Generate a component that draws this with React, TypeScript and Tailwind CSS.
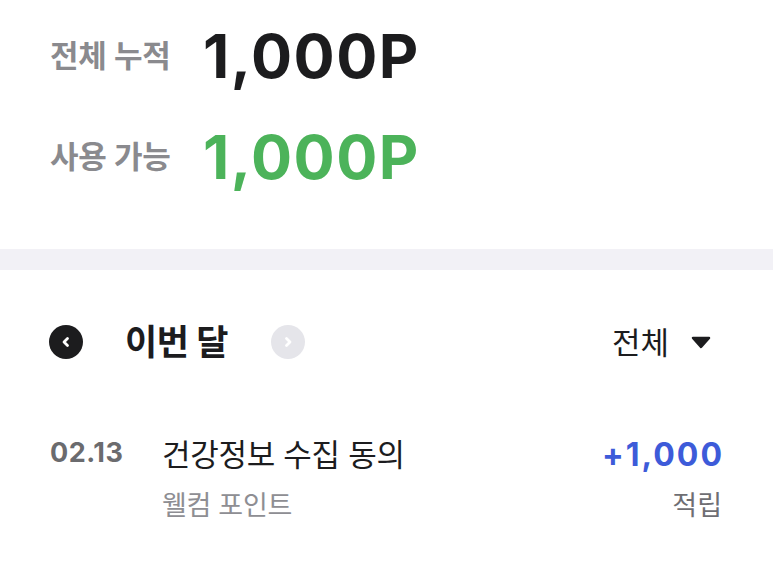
import React from 'react';

const font = "font-['Inter','Noto_Sans_CJK_KR',sans-serif]";

const Arrow = ({ dir, active }: { dir: 'left' | 'right'; active: boolean }) => (
  <div
    className={`w-[34px] h-[34px] rounded-full flex items-center justify-center ${active ? 'bg-[#1c1c1e]' : 'bg-[#e5e5ea]'}`}
  >
    <svg width="14" height="14" viewBox="0 0 14 14" fill="none">
      <path
        d={dir === 'left' ? 'M8.5 3.5 L5 7 L8.5 10.5' : 'M5.5 3.5 L9 7 L5.5 10.5'}
        stroke="white"
        strokeWidth="2.8"
        strokeLinecap="round"
        strokeLinejoin="round"
      />
    </svg>
  </div>
);

export default function App() {
  return (
    <div className={`w-[773px] h-[576px] bg-white overflow-hidden ${font}`}>
      <div className="pt-[16px] pb-[52px] pl-[50px] flex flex-col gap-[21px]">
        <div className="flex items-center h-[80px]">
          <span className="w-[153px] text-[31px] font-semibold text-[#8a8a8e] tracking-[-0.3px]">전체 누적</span>
          <span className="text-[61px] font-bold text-[#1c1c1e] tracking-[1.5px] leading-none">1,000P</span>
        </div>
        <div className="flex items-center h-[80px]">
          <span className="w-[153px] text-[31px] font-semibold text-[#8a8a8e] tracking-[-0.3px]">사용 가능</span>
          <span className="text-[61px] font-bold text-[#4cb35a] tracking-[1.5px] leading-none">1,000P</span>
        </div>
      </div>

      <div className="h-[21px] bg-[#f2f1f6]" />

      <div className="flex items-center justify-between h-[44px] mt-[50px] pl-[49px] pr-[62px]">
        <div className="flex items-center">
          <Arrow dir="left" active />
          <span className="ml-[42px] mr-[43px] text-[35px] font-bold text-[#1c1c1e] tracking-[-0.5px] leading-none">이번 달</span>
          <Arrow dir="right" active={false} />
        </div>
        <div className="flex items-center gap-[22px]">
          <span className="text-[31px] text-[#1c1c1e] leading-none">전체</span>
          <svg width="20" height="13" viewBox="0 0 20 13">
            <path d="M2 2 H18 L10 11 Z" fill="#1c1c1e" stroke="#1c1c1e" strokeWidth="2.5" strokeLinejoin="round" />
          </svg>
        </div>
      </div>

      <div className="flex justify-between pl-[50px] pr-[51px] mt-[73px]">
        <div className="flex">
          <span className="w-[112px] text-[27px] font-bold text-[#6b6b6e] leading-[32px] tracking-[0.5px]">02.13</span>
          <div className="flex flex-col">
            <span className="text-[31px] text-[#1c1c1e] leading-[36px] tracking-[-0.3px]">건강정보 수집 동의</span>
            <span className="mt-[17px] text-[27px] text-[#8e8e93] leading-[32px] tracking-[-0.3px]">웰컴 포인트</span>
          </div>
        </div>
        <div className="flex flex-col items-end">
          <span className="text-[32px] font-bold text-[#3d5bd9] leading-[36px] tracking-[2px] -mr-[2px]">+1,000</span>
          <span className="mt-[17px] text-[27px] text-[#6e6e73] leading-[32px]">적립</span>
        </div>
      </div>
    </div>
  );
}
